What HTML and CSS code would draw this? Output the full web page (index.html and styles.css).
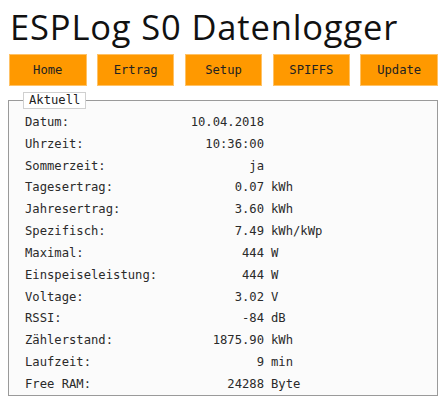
FILE: index.html
```html
<!DOCTYPE html>
<html lang="de">
<head>
<meta charset="utf-8">
<title>ESPLog S0 Datenlogger</title>
<link rel="stylesheet" href="styles.css">
</head>
<body>
<h1 class="title">ESPLog S0 Datenlogger</h1>
<nav class="menu">
  <a class="btn">Home</a>
  <a class="btn">Ertrag</a>
  <a class="btn">Setup</a>
  <a class="btn">SPIFFS</a>
  <a class="btn">Update</a>
</nav>
<fieldset class="box">
  <legend class="legend">Aktuell</legend>
  <div class="grid">
    <span class="lbl">Datum:</span><span class="val">10.04.2018</span><span class="unit"></span>
    <span class="lbl">Uhrzeit:</span><span class="val">10:36:00</span><span class="unit"></span>
    <span class="lbl">Sommerzeit:</span><span class="val">ja</span><span class="unit"></span>
    <span class="lbl">Tagesertrag:</span><span class="val">0.07</span><span class="unit">kWh</span>
    <span class="lbl">Jahresertrag:</span><span class="val">3.60</span><span class="unit">kWh</span>
    <span class="lbl">Spezifisch:</span><span class="val">7.49</span><span class="unit">kWh/kWp</span>
    <span class="lbl">Maximal:</span><span class="val">444</span><span class="unit">W</span>
    <span class="lbl">Einspeiseleistung:</span><span class="val">444</span><span class="unit">W</span>
    <span class="lbl">Voltage:</span><span class="val">3.02</span><span class="unit">V</span>
    <span class="lbl">RSSI:</span><span class="val">-84</span><span class="unit">dB</span>
    <span class="lbl">Zählerstand:</span><span class="val">1875.90</span><span class="unit">kWh</span>
    <span class="lbl">Laufzeit:</span><span class="val">9</span><span class="unit">min</span>
    <span class="lbl">Free RAM:</span><span class="val">24288</span><span class="unit">Byte</span>
  </div>
</fieldset>
</body>
</html>
```
FILE: styles.css
```css
html { background: #ffffff; }
body {
  margin: 8px;
  font-family: "DejaVu Sans Mono", "Liberation Mono", monospace;
  color: #222;
}
.title {
  margin: 0 0 0 2px;
  height: 40px;
  font-family: "Open Sans", "Noto Sans", sans-serif;
  font-weight: 400;
  font-size: 34.5px;
  line-height: 38px;
  color: #111;
  letter-spacing: 0.85px;
  white-space: nowrap;
}
.menu {
  display: flex;
  gap: 10.25px;
  margin: 6px 0 0 1px;
}
.btn {
  box-sizing: border-box;
  width: 78px;
  height: 32px;
  display: flex;
  align-items: center;
  justify-content: center;
  background: #ff9900;
  border: 1px solid #ffc266;
  font-size: 12.2px;
  color: #222;
}
.box {
  margin: 6px 0 0 0;
  padding: 2px 16px 0 16px;
  border: 1px solid #9a9a9a;
  background: #fbfbfb;
  min-width: 0;
}
.legend {
  padding: 0 5px;
  margin-left: -2px;
  border: 1px solid #d0d0d0;
  background: #ffffff;
  font-size: 12.2px;
  line-height: 15px;
  color: #222;
}
.grid {
  display: grid;
  grid-template-columns: 165px 74px auto;
  grid-auto-rows: 21.83px;
  align-items: center;
  font-size: 12.2px;
  color: #2a2a2a;
}
.val { text-align: right; }
.unit { padding-left: 7px; }
```
